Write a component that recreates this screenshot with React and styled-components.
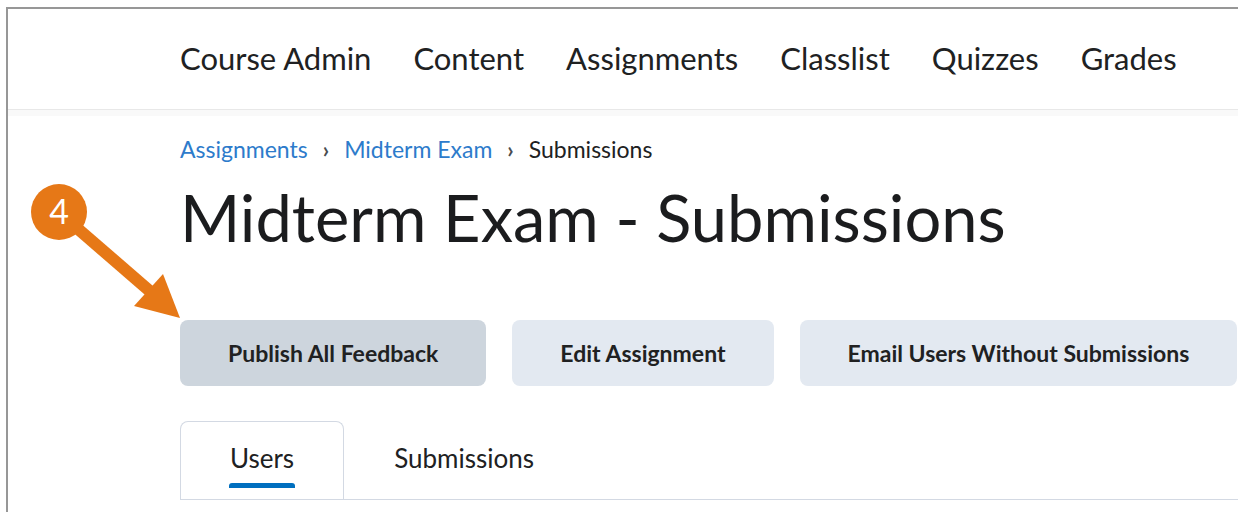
import React from "react";
import styled, { createGlobalStyle } from "styled-components";

const GlobalStyle = createGlobalStyle`
  html, body {
    margin: 0;
    padding: 0;
    background: #ffffff;
  }
  body {
    font-family: Lato, "Noto Sans", sans-serif;
    color: #202122;
    overflow: hidden;
  }
`;

const Page = styled.div`
  position: relative;
  width: 1238px;
  height: 512px;
  overflow: hidden;
`;

const Frame = styled.div`
  margin: 7px 0 0 6px;
  border-top: 2px solid #979797;
  border-left: 2px solid #979797;
  height: 520px;
  background: #ffffff;
`;

const NavBar = styled.nav`
  display: flex;
  align-items: center;
  gap: 42px;
  height: 100px;
  padding-left: 172px;
  border-bottom: 1px solid #e8e8e8;
`;

const NavItem = styled.span`
  font-size: 31px;
  line-height: 36px;
  margin-bottom: 2px;
  color: #202122;
`;

const Shade = styled.div`
  height: 6px;
  background: #f9f9f9;
`;

const Main = styled.main`
  padding-left: 172px;
`;

const Crumbs = styled.div`
  display: flex;
  align-items: center;
  gap: 15px;
  margin-top: 19px;
  height: 28px;
  font-size: 23px;
`;

const Crumb = styled.span`
  color: ${(p) => (p.$link ? "#2d7bcb" : "#202122")};
`;

const Sep = styled.span`
  font-size: 22px;
  color: #494c50;
  font-weight: 700;
`;

const Title = styled.h1`
  margin: 15px 0 0;
  font-size: 65px;
  font-weight: 400;
  line-height: 78px;
  color: #1b1c1e;
`;

const Actions = styled.div`
  display: flex;
  gap: 26px;
  margin-top: 64px;
`;

const Button = styled.button`
  height: 66px;
  padding: 0 48px;
  border: none;
  border-radius: 8px;
  background: ${(p) => (p.$active ? "#cdd5dd" : "#e3e9f1")};
  font-family: Lato, "Noto Sans", sans-serif;
  font-size: 23px;
  font-weight: 700;
  color: #202122;
  white-space: nowrap;
  flex-shrink: 0;
`;

const TabRow = styled.div`
  display: flex;
  margin-top: 35px;
  border-bottom: 1px solid #d3d9e3;
`;

const Tab = styled.div`
  position: relative;
  display: flex;
  align-items: center;
  justify-content: center;
  box-sizing: border-box;
  height: 78px;
  padding: 0 49px 6px;
  margin-bottom: ${(p) => (p.$selected ? "-1px" : "0")};
  font-size: 26px;
  color: #202122;
  background: ${(p) => (p.$selected ? "#ffffff" : "transparent")};
  border: 1px solid ${(p) => (p.$selected ? "#d3d9e3" : "transparent")};
  border-bottom: none;
  border-radius: 8px 8px 0 0;
`;

const Indicator = styled.span`
  position: absolute;
  left: 48px;
  right: 48px;
  bottom: 11px;
  height: 5px;
  border-radius: 3px 3px 0 0;
  background: #006fbf;
`;

const Callout = styled.svg`
  position: absolute;
  left: 0;
  top: 0;
  pointer-events: none;
`;

const nav = ["Course Admin", "Content", "Assignments", "Classlist", "Quizzes", "Grades"];

export default function App() {
  return (
    <Page>
      <GlobalStyle />
      <Frame>
        <NavBar>
          {nav.map((n) => (
            <NavItem key={n}>{n}</NavItem>
          ))}
        </NavBar>
        <Shade />
        <Main>
          <Crumbs>
            <Crumb $link>Assignments</Crumb>
            <Sep>›</Sep>
            <Crumb $link>Midterm Exam</Crumb>
            <Sep>›</Sep>
            <Crumb>Submissions</Crumb>
          </Crumbs>
          <Title>Midterm Exam - Submissions</Title>
          <Actions>
            <Button $active>Publish All Feedback</Button>
            <Button>Edit Assignment</Button>
            <Button>Email Users Without Submissions</Button>
          </Actions>
          <TabRow>
            <Tab $selected>
              Users
              <Indicator />
            </Tab>
            <Tab>Submissions</Tab>
          </TabRow>
        </Main>
      </Frame>

      {/* numbered step marker with arrow */}
      <Callout width="240" height="340" viewBox="0 0 240 340">
        <line x1="70" y1="222" x2="152" y2="293" stroke="#e67817" strokeWidth="12" />
        <polygon points="180,318 134,306 163,274" fill="#e67817" />
        <circle cx="59" cy="212" r="28" fill="#e67817" />
        <text
          x="59"
          y="224"
          textAnchor="middle"
          fontFamily="Lato, sans-serif"
          fontSize="34"
          fill="#ffffff"
        >
          4
        </text>
      </Callout>
    </Page>
  );
}
